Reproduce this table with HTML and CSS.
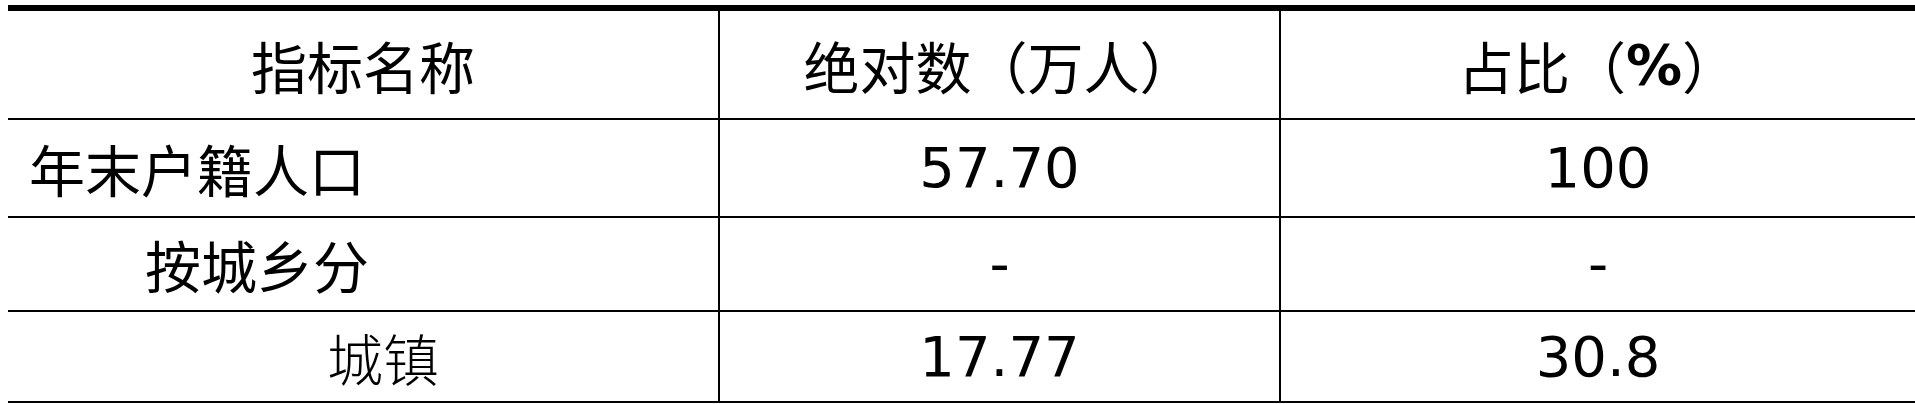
FILE: index.html
```html
<!DOCTYPE html>
<html lang="zh-CN">
<head>
<meta charset="utf-8">
<title>户籍人口</title>
<link rel="stylesheet" href="styles.css">
</head>
<body>
<div class="table" role="table">
  <div class="cell head" role="columnheader">指标名称</div>
  <div class="cell head" role="columnheader">绝对数（万人）</div>
  <div class="cell head last" role="columnheader">占比（<span class="pct">%</span>）</div>

  <div class="cell label lvl0" role="cell">年末户籍人口</div>
  <div class="cell num" role="cell">57.70</div>
  <div class="cell num last" role="cell">100</div>

  <div class="cell label lvl1" role="cell">按城乡分</div>
  <div class="cell num" role="cell">-</div>
  <div class="cell num last" role="cell">-</div>

  <div class="cell label lvl2 thin" role="cell">城镇</div>
  <div class="cell num" role="cell">17.77</div>
  <div class="cell num last" role="cell">30.8</div>
</div>
</body>
</html>
```

FILE: styles.css
```css
html, body {
  margin: 0;
  padding: 0;
  background: #fff;
  overflow: hidden;
}

body {
  font-family: "DejaVu Sans", "Noto Sans CJK SC", sans-serif;
  color: #000;
}

.table {
  display: grid;
  grid-template-columns: 712px 561px 634px;
  grid-template-rows: 109px 98px 94px 91px;
  margin: 5px 0 0 8px;
  border-top: 6px solid #000;
}

.cell {
  box-sizing: border-box;
  display: flex;
  align-items: center;
  justify-content: center;
  border-right: 2px solid #000;
  border-bottom: 2px solid #000;
  font-size: 56px;
  line-height: 1;
  white-space: pre;
}

.cell.last {
  border-right: none;
}

.head {
  font-family: "Noto Sans CJK SC", sans-serif;
}

.pct {
  font-family: "DejaVu Sans", sans-serif;
  font-weight: bold;
}

.label {
  justify-content: flex-start;
  font-family: "Noto Sans CJK SC", sans-serif;
}

.lvl0 { padding-left: 21px; }
.lvl1 { padding-left: 137px; }
.lvl2 { padding-left: 319px; }

.thin {
  font-weight: 300;
}

.num {
  font-family: "DejaVu Sans", sans-serif;
}
```
